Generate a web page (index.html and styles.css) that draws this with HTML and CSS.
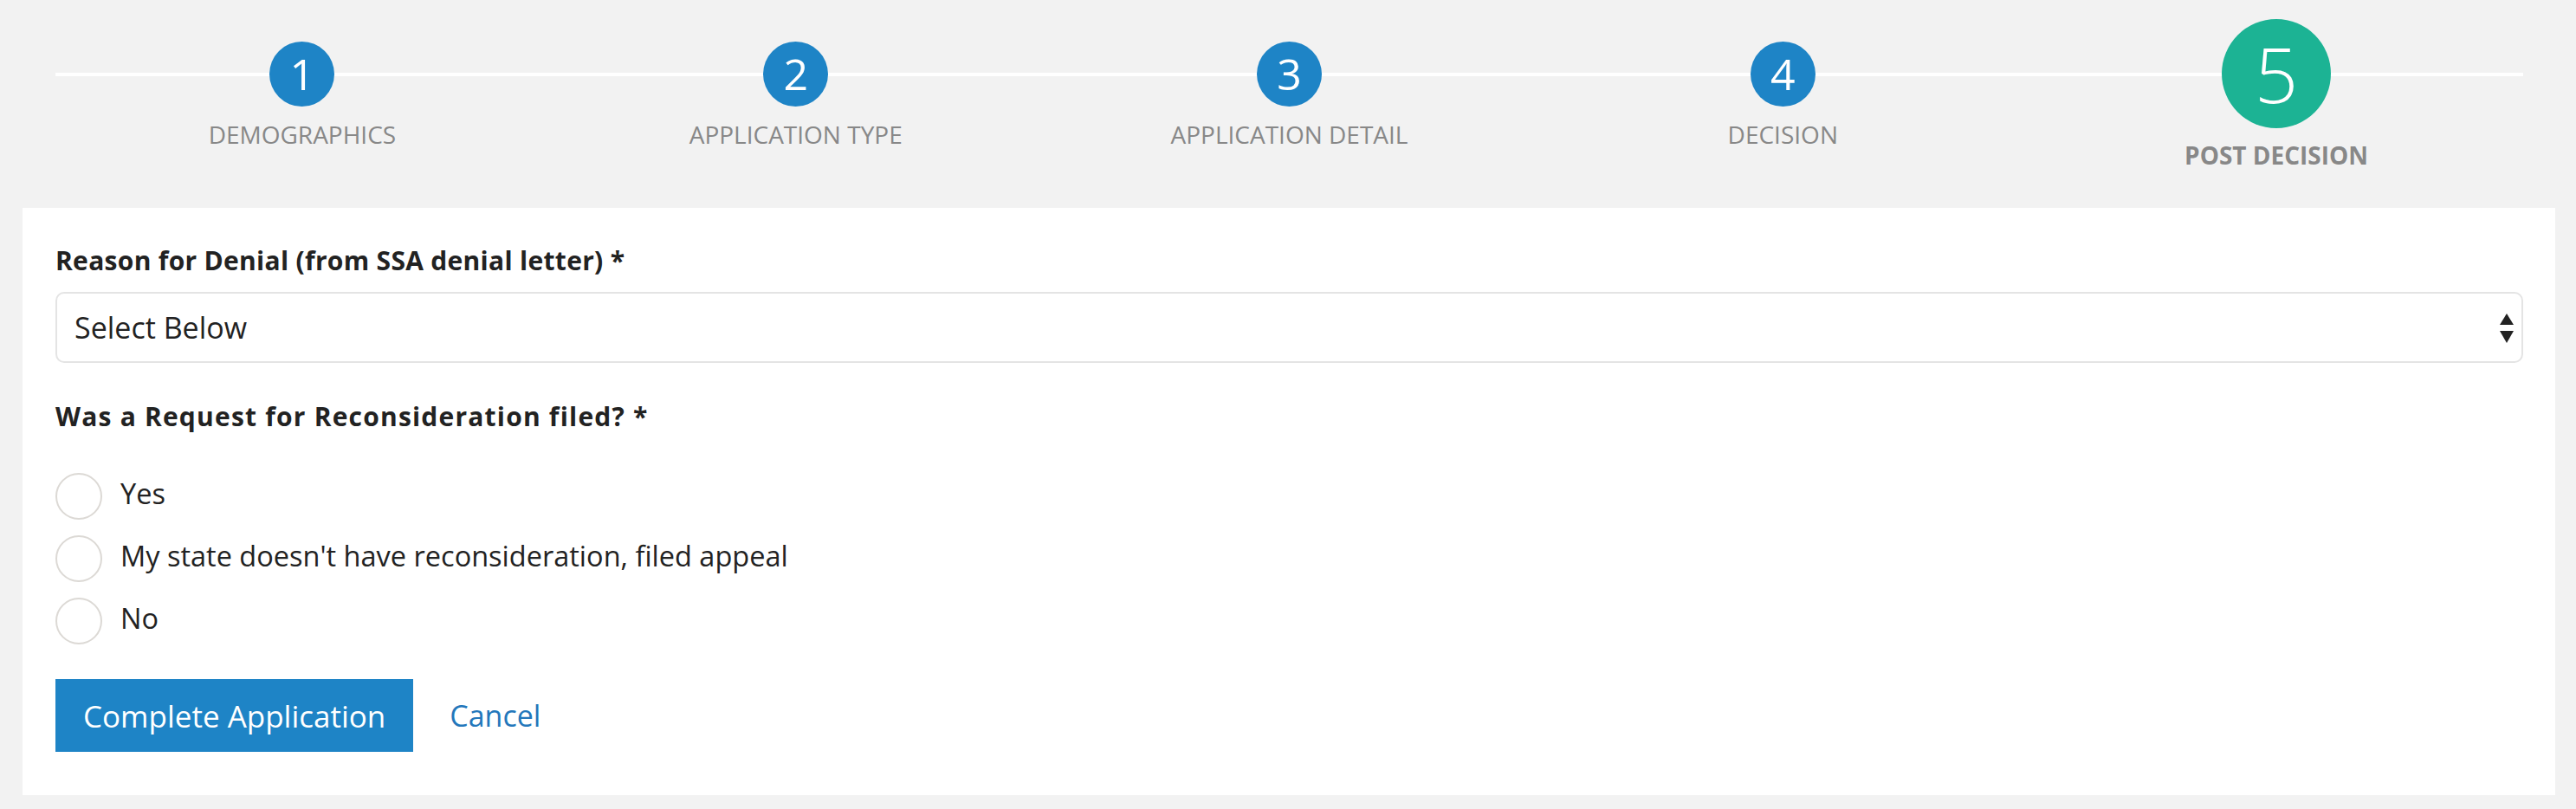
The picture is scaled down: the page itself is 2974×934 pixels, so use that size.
FILE: index.html
```html
<!DOCTYPE html>
<html lang="en">
<head>
  <meta charset="UTF-8">
  <meta name="viewport" content="width=device-width, initial-scale=1.0">
  <title>Post Decision</title>
  <link rel="stylesheet" href="styles.css">
</head>
<body>
<div class="page">
  <!-- progress steps -->
  <div class="steps">
    <div class="step">
      <div class="step-num">1</div>
      <div class="step-name">DEMOGRAPHICS</div>
    </div>
    <div class="step">
      <div class="step-num">2</div>
      <div class="step-name">APPLICATION TYPE</div>
    </div>
    <div class="step">
      <div class="step-num">3</div>
      <div class="step-name">APPLICATION DETAIL</div>
    </div>
    <div class="step">
      <div class="step-num">4</div>
      <div class="step-name">DECISION</div>
    </div>
    <div class="step active">
      <div class="step-num">5</div>
      <div class="step-name">POST DECISION</div>
    </div>
  </div>

  <form class="panel" action="#">
    <label class="field-label" for="reason">Reason for Denial (from SSA denial letter) *</label>
    <div class="select-wrap">
      <select class="selectbox" id="reason" name="reason">
        <option value="">Select Below</option>
      </select>
      <svg class="select-arrows" width="16" height="34" viewBox="0 0 16 34">
        <path d="M8 0 L16 13 L0 13 Z" fill="#222"/>
        <path d="M0 20 L16 20 L8 34 Z" fill="#222"/>
      </svg>
    </div>

    <p class="field-label question">Was a Request for Reconsideration filed? *</p>
    <div class="radio-list">
      <label class="radio-row">
        <input type="radio" class="radio" name="recon" value="yes">
        <span class="radio-text">Yes</span>
      </label>
      <label class="radio-row">
        <input type="radio" class="radio" name="recon" value="appeal">
        <span class="radio-text">My state doesn't have reconsideration, filed appeal</span>
      </label>
      <label class="radio-row">
        <input type="radio" class="radio" name="recon" value="no">
        <span class="radio-text">No</span>
      </label>
    </div>

    <div class="actions">
      <button type="button" class="button">Complete Application</button>
      <a href="#" class="cancel">Cancel</a>
    </div>
  </form>
</div>
</body>
</html>
```

FILE: styles.css
```css
body {
  font-family: 'Open Sans', 'Noto Sans', sans-serif;
  margin: 0;
  padding: 0;
  background: #f2f2f2;
}

* {
  box-sizing: border-box;
}

.page {
  padding: 0 24px 16px 26px;
  background: #f2f2f2;
}

/* Steps */
.steps {
  display: flex;
  height: 240px;
  margin: 0 37px 0 38px;
  padding-top: 22px;
  background: linear-gradient(#fff, #fff) no-repeat 0 84px / 100% 4px;
}

.step {
  flex: 1;
  display: flex;
  flex-direction: column;
  align-items: center;
}

.step-num {
  width: 75px;
  height: 75px;
  margin-top: 26px;
  border-radius: 50%;
  background: #1e84c6;
  color: #fff;
  font-size: 50px;
  line-height: 75px;
  text-align: center;
}

.step-name {
  margin-top: 12px;
  font-size: 28px;
  line-height: 40px;
  color: #888;
}

.step.active .step-num {
  width: 126px;
  height: 126px;
  margin-top: 0;
  background: #1cb394;
  font-size: 88px;
  font-weight: 300;
  line-height: 126px;
}

.step.active .step-name {
  margin-top: 11px;
  font-weight: 700;
}

/* Form panel */
.panel {
  display: block;
  background: #fff;
  padding: 41px 37px 50px 38px;
  margin: 0;
}

.field-label {
  display: block;
  margin: 0 0 16px;
  font-size: 30px;
  font-weight: 700;
  line-height: 40px;
  letter-spacing: 0.3px;
  color: #222;
}

.question {
  margin: 42px 0 0;
  letter-spacing: 1.2px;
}

.select-wrap {
  position: relative;
}

.selectbox {
  display: block;
  width: 100%;
  height: 82px;
  padding: 0 60px 0 20px;
  border: 2px solid #e4e4e4;
  border-radius: 10px;
  background: #fff;
  font-family: 'Open Sans', sans-serif;
  font-size: 34px;
  color: #222;
  -webkit-appearance: none;
  appearance: none;
  outline: none;
}

.select-arrows {
  position: absolute;
  right: 11px;
  top: 25px;
}

.radio-list {
  margin-top: 36px;
}

.radio-row {
  display: flex;
  align-items: center;
  height: 72px;
  gap: 21px;
  cursor: pointer;
}

.radio {
  -webkit-appearance: none;
  appearance: none;
  width: 54px;
  height: 54px;
  margin: 0;
  border: 2px solid #dcd9d5;
  border-radius: 50%;
  background: #fff;
  flex-shrink: 0;
}

.radio:checked {
  border: 16px solid #1e84c6;
}

.radio-text {
  font-size: 32.5px;
  line-height: 40px;
  padding-bottom: 7px;
  color: #222;
}

.actions {
  display: flex;
  align-items: center;
  margin-top: 31px;
}

.button {
  height: 84px;
  padding: 0 32px;
  border: none;
  border-radius: 0;
  background: #1e84c6;
  color: #fff;
  font-family: 'Open Sans', sans-serif;
  font-size: 35px;
  cursor: pointer;
}

.cancel {
  margin-left: 42px;
  font-size: 34px;
  color: #2377bb;
  text-decoration: none;
}
```
